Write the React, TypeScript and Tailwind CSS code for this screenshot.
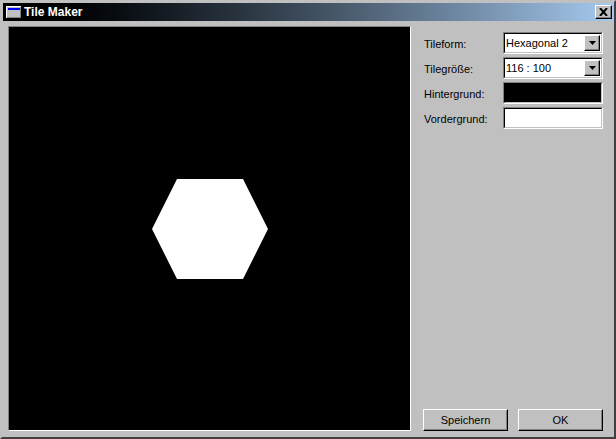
const font = { fontFamily: '"Liberation Sans", Arial, sans-serif' };

function SunkenField({ className, children }: { className: string; children?: React.ReactNode }) {
  return (
    <div className="h-[22px] w-[100px] border border-t-[#808080] border-l-[#808080] border-r-white border-b-white">
      <div className={`flex h-full items-center border border-t-black border-l-black border-r-[#c0c0c0] border-b-[#c0c0c0] ${className}`}>{children}</div>
    </div>
  );
}

function Combo({ value }: { value: string }) {
  return (
    <SunkenField className="bg-white pl-[1px] pr-[1px]">
      <span className="flex-1 pt-[1px] text-[11px] leading-none text-black">{value}</span>
      <div className="flex h-[16px] w-[16px] items-center justify-center border border-t-white border-l-white border-r-black border-b-black bg-[#c0c0c0] shadow-[inset_-1px_-1px_0_#808080]">
        <svg width="7" height="4" viewBox="0 0 7 4"><path d="M0 0h7L3.5 4z" fill="#000" /></svg>
      </div>
    </SunkenField>
  );
}

function Row({ label, children }: { label: string; children: React.ReactNode }) {
  return (
    <div className="flex h-[22px] items-center justify-between">
      <span className="pl-[1px] pt-[2px] text-[11px] text-black">{label}</span>
      {children}
    </div>
  );
}

function Button({ label }: { label: string }) {
  return (
    <div className="flex h-[22px] w-[85px] items-center justify-center border border-t-white border-l-white border-r-black border-b-black bg-[#c0c0c0] text-[11px] text-black shadow-[inset_-1px_-1px_0_#808080]">
      {label}
    </div>
  );
}

export default function App() {
  return (
    <div className="flex h-[439px] w-[616px] flex-col overflow-hidden border-2 border-t-[#c0c0c0] border-l-[#c0c0c0] border-r-[#404040] border-b-[#404040] bg-[#c0c0c0]" style={font}>
      <div className="mx-[1px] mt-[1px] flex h-[18px] shrink-0 items-center bg-gradient-to-r from-black to-[#a6caf0] pl-[3px] pr-[1px]">
        <svg width="15" height="12" viewBox="0 0 15 12" className="mr-[3px]">
          <rect x="0" y="0" width="15" height="12" fill="#fff" />
          <rect x="1" y="1" width="14" height="11" fill="#c0c0c0" />
          <rect x="2" y="2" width="12" height="2" fill="#0000ff" />
          <rect x="14" y="1" width="1" height="11" fill="#808080" />
          <rect x="1" y="11" width="14" height="1" fill="#808080" />
        </svg>
        <span className="flex-1 text-[12px] font-bold text-white">Tile Maker</span>
        <div className="flex h-[14px] w-[17px] items-center justify-center border border-t-white border-l-white border-r-black border-b-black bg-[#c0c0c0] shadow-[inset_-1px_-1px_0_#808080]">
          <svg width="9" height="8" viewBox="0 0 9 8"><path d="M1 0l7 8M8 0L1 8" stroke="#000" strokeWidth="2" /></svg>
        </div>
      </div>
      <div className="flex flex-1 pb-[6px] pl-[6px] pr-[11px] pt-[5px]">
        <div className="flex h-[405px] w-[403px] shrink-0 items-center justify-center border border-t-[#808080] border-l-[#808080] border-r-white border-b-white bg-black">
          <svg width="116" height="100" viewBox="0 0 116 100" className="mt-[1px]">
            <polygon points="25,0 91,0 116,50 91,100 25,100 0,50" fill="#fff" />
          </svg>
        </div>
        <div className="ml-[12px] flex flex-1 flex-col justify-between pt-[6px]">
          <div className="flex flex-col gap-[3px]">
            <Row label="Tileform:"><Combo value="Hexagonal 2" /></Row>
            <Row label="Tilegröße:"><Combo value="116 : 100" /></Row>
            <Row label="Hintergrund:"><SunkenField className="bg-black" /></Row>
            <Row label="Vordergrund:"><SunkenField className="bg-white" /></Row>
          </div>
          <div className="flex justify-between">
            <Button label="Speichern" />
            <Button label="OK" />
          </div>
        </div>
      </div>
    </div>
  );
}
